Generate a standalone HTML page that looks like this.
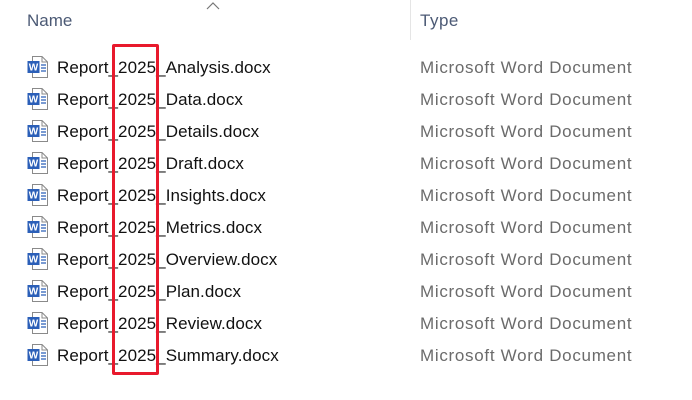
<!DOCTYPE html>
<html><head><style>
body{margin:0;width:692px;height:400px;background:#fff;font-family:"Liberation Sans",sans-serif;position:relative;overflow:hidden}
.h{position:absolute;top:11px;font-size:17px;color:#4c5a75}
.row{position:absolute;left:0;height:32px;width:692px}
.n{position:absolute;left:57px;top:6px;font-size:17px;color:#111;letter-spacing:0.08px}
.t{position:absolute;left:420px;top:6px;font-size:17px;color:#6b6b6b;letter-spacing:0.7px}
.ic{position:absolute;left:27px;top:3px}
</style></head><body>
<div class="h" style="left:27px">Name</div>
<svg style="position:absolute;left:206px;top:2px" width="14" height="8"><path d="M1 7 L7 1 L13 7" fill="none" stroke="#777" stroke-width="1.2"/></svg>
<div style="position:absolute;left:410px;top:0;width:1px;height:40px;background:#e5e5e5"></div>
<div class="h" style="left:420px;letter-spacing:0.5px">Type</div>
<div id="rows"></div>
<div style="position:absolute;left:112px;top:44px;width:41px;height:325px;border:3px solid #e8192c;border-radius:2px"></div>
<script>
var names=["Analysis","Data","Details","Draft","Insights","Metrics","Overview","Plan","Review","Summary"];
var h="";
names.forEach(function(n,i){
h+='<div class="row" style="top:'+(52+i*32)+'px"><svg class="ic" width="22" height="24"><path d="M5.5 1.5 H15 L20.5 7 V22.5 H5.5 Z" fill="#fff" stroke="#8a8a8a"/><path d="M15 1.5 V7 H20.5" fill="none" stroke="#8a8a8a"/><rect x="0.5" y="6" width="12" height="12" fill="#2b5fb8"/><text x="6.5" y="15.5" font-size="10" font-weight="bold" fill="#fff" text-anchor="middle" font-family="Liberation Sans">W</text><path d="M14 10h5M14 13h5M14 16h5" stroke="#2b5fb8" stroke-width="1.2"/></svg><div class="n">Report_2025_'+n+'.docx</div><div class="t">Microsoft Word Document</div></div>';
});
document.getElementById("rows").innerHTML=h;
</script>
</body></html>
